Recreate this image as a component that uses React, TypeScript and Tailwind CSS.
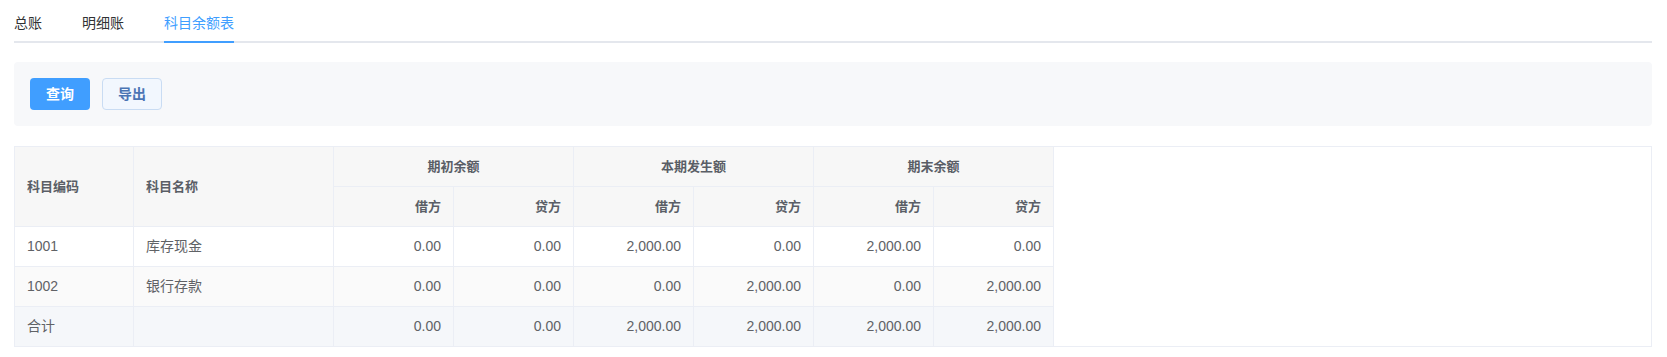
import React from "react";

const font = "font-['Liberation_Sans','Noto_Sans_CJK_SC',sans-serif]";

const tabs = ["总账", "明细账", "科目余额表"];

const rows = [
  { code: "1001", name: "库存现金", vals: ["0.00", "0.00", "2,000.00", "0.00", "2,000.00", "0.00"], bg: "bg-white" },
  { code: "1002", name: "银行存款", vals: ["0.00", "0.00", "0.00", "2,000.00", "0.00", "2,000.00"], bg: "bg-[#fafafa]" },
  { code: "合计", name: "", vals: ["0.00", "0.00", "2,000.00", "2,000.00", "2,000.00", "2,000.00"], bg: "bg-[#f5f7fa]" },
];

const groups = ["期初余额", "本期发生额", "期末余额"];

export default function App() {
  const active = 2;
  const cell = "border-r border-b border-[#ebeef5] px-3 flex items-center";
  const head = `${cell} bg-[#f7f7f7] text-[13px] font-bold text-[#5a5e66]`;

  return (
    <div className={`${font} bg-white pl-[14px] pr-[15px] pt-[3px] pb-3`}>
      {/* 标签页 */}
      <div className="relative flex h-[40px]">
        <div className="absolute left-0 right-0 bottom-0 h-[2px] bg-[#e4e7ed]" />
        {tabs.map((t, i) => (
          <div
            key={t}
            className={`relative h-[40px] leading-[40px] text-[14px] ${i === 0 ? "pr-5" : "px-5"} ${
              i === active ? "text-[#409eff]" : "text-[#303133]"
            }`}
          >
            {t}
            {i === active && (
              <div className="absolute left-5 right-5 bottom-0 h-[2px] bg-[#409eff]" />
            )}
          </div>
        ))}
      </div>

      {/* 工具栏 */}
      <div className="mt-[19px] h-[64px] rounded bg-[#f7f8fa] px-4 flex items-center gap-3">
        <button className="w-[60px] h-[32px] rounded bg-[#409eff] text-white text-[14px] font-bold">
          查询
        </button>
        <button className="w-[60px] h-[32px] rounded border border-[#c9dcf3] bg-[#f2f7fe] text-[#4a74b4] text-[14px] font-bold">
          导出
        </button>
      </div>

      {/* 科目余额表 */}
      <div className="mt-[20px] border-t border-l border-r border-[#ebeef5]">
        <div className="grid grid-cols-[119px_200px_repeat(6,120px)] grid-rows-[40px_40px_40px_40px_40px]">
          <div className={`${head} row-span-2`}>科目编码</div>
          <div className={`${head} row-span-2`}>科目名称</div>
          {groups.map((g) => (
            <div key={g} className={`${head} col-span-2 justify-center`}>
              {g}
            </div>
          ))}
          {groups.map((g) => (
            <React.Fragment key={g + "-sub"}>
              <div className={`${head} justify-end`}>借方</div>
              <div className={`${head} justify-end`}>贷方</div>
            </React.Fragment>
          ))}
          {rows.map((r) => (
            <React.Fragment key={r.code}>
              <div className={`${cell} ${r.bg} text-[14px] text-[#606266]`}>{r.code}</div>
              <div className={`${cell} ${r.bg} text-[14px] text-[#606266]`}>{r.name}</div>
              {r.vals.map((v, j) => (
                <div key={j} className={`${cell} ${r.bg} justify-end text-[14px] text-[#606266]`}>
                  {v}
                </div>
              ))}
            </React.Fragment>
          ))}
        </div>
        <div className="h-0 border-b border-[#ebeef5] -mt-px" />
      </div>
    </div>
  );
}
